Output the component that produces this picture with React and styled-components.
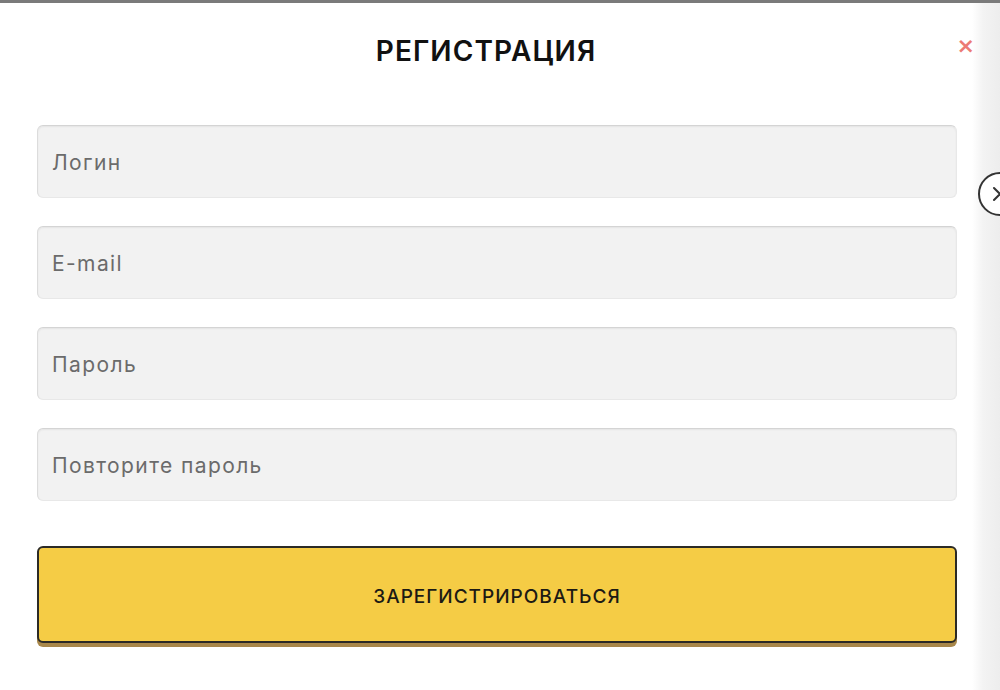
import React from "react";
import styled, { createGlobalStyle } from "styled-components";

const GlobalStyle = createGlobalStyle`
  html, body {
    margin: 0;
    padding: 0;
    background: #fff;
    font-family: Inter, "Noto Sans", sans-serif;
    overflow: hidden;
  }
`;

const Page = styled.div`
  position: relative;
  width: 1000px;
  height: 690px;
  display: flex;
  border-top: 3px solid #7a7a7a;
  box-sizing: border-box;
  overflow: hidden;
`;

const Modal = styled.div`
  position: relative;
  flex: 1;
  padding: 0 15px 0 37px;
  background: #fff;
`;

const Side = styled.div`
  width: 28px;
  background: linear-gradient(to right, #fff 0%, #f3f3f3 40%, #ededed 100%);
`;

const Title = styled.h2`
  margin: 0;
  padding: 31px 22px 0 0;
  height: 92px;
  box-sizing: border-box;
  text-align: center;
  font-size: 28px;
  font-weight: 600;
  color: #111;
  letter-spacing: 1.1px;
`;

const Close = styled.button`
  position: absolute;
  top: 32px;
  right: -3px;
  border: none;
  background: none;
  padding: 0;
  color: #ec7b74;
  font-size: 22px;
  font-weight: 700;
  line-height: 1;
  cursor: pointer;
  font-family: "DejaVu Sans", sans-serif;
`;

const Form = styled.form`
  display: flex;
  flex-direction: column;
  gap: 28px;
  padding-top: 30px;
`;

const Input = styled.input`
  height: 73px;
  box-sizing: border-box;
  background: #f2f2f2;
  border: 1px solid #e8e8e8;
  border-top-color: #d4d4d4;
  border-left-color: #dcdcdc;
  border-radius: 6px;
  box-shadow: inset 0 1px 2px rgba(0, 0, 0, 0.06);
  padding: 2px 14px 0;
  font-family: Inter, "Noto Sans", sans-serif;
  font-size: 21px;
  letter-spacing: 1.4px;
  color: #333;
  outline: none;

  &::placeholder {
    color: #6b6b6b;
  }
`;

const Submit = styled.button`
  margin-top: 17px;
  height: 97px;
  padding-top: 4px;
  background: #f5cc45;
  border: 2px solid #2b2a26;
  border-radius: 6px;
  box-shadow: 0 4px 0 #a8874a;
  font-family: Inter, "Noto Sans", sans-serif;
  font-size: 19px;
  font-weight: 500;
  color: #1c1a14;
  letter-spacing: 1px;
  cursor: pointer;
`;

const CircleClose = styled.div`
  position: absolute;
  left: 978px;
  top: 169px;
  width: 40px;
  height: 40px;
  border: 2px solid #333;
  border-radius: 50%;
  background: #fff;
  display: flex;
  align-items: center;
  justify-content: center;
`;

const App = () => {
  return (
    <>
      <GlobalStyle />
      <Page>
        <Modal>
          <Title>РЕГИСТРАЦИЯ</Title>
          <Close aria-label="close">×</Close>
          <Form onSubmit={(e) => e.preventDefault()}>
            <Input placeholder="Логин" />
            <Input placeholder="E-mail" />
            <Input type="password" placeholder="Пароль" />
            <Input type="password" placeholder="Повторите пароль" />
            <Submit type="submit">ЗАРЕГИСТРИРОВАТЬСЯ</Submit>
          </Form>
        </Modal>
        <Side />
        <CircleClose>
          <svg width="20" height="20" viewBox="0 0 20 20">
            <path d="M4 4 L16 16 M16 4 L4 16" stroke="#333" strokeWidth="2" strokeLinecap="round" />
          </svg>
        </CircleClose>
      </Page>
    </>
  );
};

export default App;
